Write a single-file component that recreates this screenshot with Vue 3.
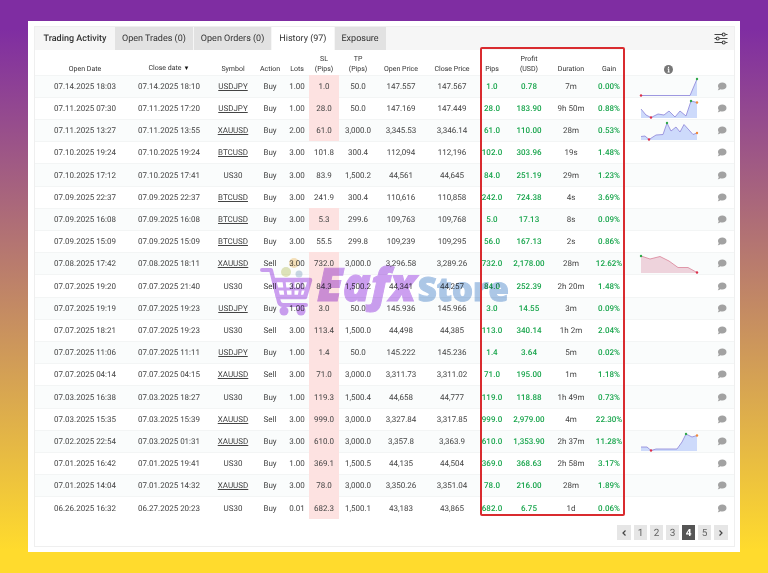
<template>
  <main class="page">
    <section class="panel">
      <div class="frame">
        <header class="tabs">
          <h1 class="heading">Trading Activity</h1>
          <nav class="tab-list">
            <button v-for="t in tabs" :key="t" type="button" class="tab" :class="{ active: t === activeTab }" @click="activeTab = t">{{ t }}</button>
          </nav>
          <button type="button" class="filter" aria-label="Filter">
            <svg viewBox="0 0 14 14" width="14" height="14" fill="none" stroke="#444" stroke-width="1.1">
              <path d="M0.500 2.500H8M11.500 2.500H13.500M0.500 6.500H2M5.500 6.500H13.500M0.500 10.500H8M11.500 10.500H13.500" />
              <circle cx="9.700" cy="2.500" r="1.500" /><circle cx="3.700" cy="6.500" r="1.500" /><circle cx="9.700" cy="10.500" r="1.500" />
            </svg>
          </button>
        </header>

        <div class="content">
          <div class="watermark" aria-hidden="true">
            <svg class="cart" viewBox="0 0 56 60" width="56" height="60">
              <circle cx="35" cy="7" r="5" fill="#f8dfb4" /><circle cx="27" cy="16" r="5" fill="#dfe2b4" /><circle cx="40" cy="18" r="3.500" fill="#c4d4e2" />
              <path d="M3 14H12L20 46Q21 49 24 49H47" fill="none" stroke="#c795ef" stroke-width="4" stroke-linecap="round" stroke-linejoin="round" />
              <path d="M15 24H51L46 41H19Z" fill="none" stroke="#c795ef" stroke-width="4.500" stroke-linejoin="round" />
              <path d="M17 33H49M25 25L27 41M34 25V41M43 25L40 41" fill="none" stroke="#c795ef" stroke-width="3" />
              <circle cx="25" cy="55" r="4.500" fill="#c795ef" /><circle cx="42" cy="55" r="4.500" fill="#c795ef" />
            </svg>
            <div class="wordmark"><span class="brand">Eafx</span><span class="brand-store">Store</span></div>
          </div>

          <table class="trades">
            <colgroup>
              <col v-for="c in columns" :key="c.key" :class="'col-' + c.key">
            </colgroup>
            <thead>
              <tr>
                <th v-for="c in columns" :key="c.key" scope="col" :class="'cell-' + c.key">
                  <svg v-if="c.key === 'chart'" class="info" viewBox="0 0 10 10" width="9" height="9" role="img" aria-label="Info">
                    <circle cx="5" cy="5" r="5" fill="#777" /><path d="M5 2V3.200M4 4.500H5.200V7.500M4 7.700H6.300" fill="none" stroke="#fff" stroke-width="1.200" />
                  </svg>
                  <template v-else>{{ c.label }}<span v-if="c.key === 'close'" class="sort">▼</span></template>
                </th>
              </tr>
            </thead>
            <tbody>
              <tr v-for="r in rows" :key="r.open">
                <td class="cell-open">{{ r.open }}</td>
                <td class="cell-close">{{ r.close }}</td>
                <td><a v-if="r.symbol !== 'US30'" href="#">{{ r.symbol }}</a><template v-else>US30</template></td>
                <td>{{ r.action }}</td>
                <td>{{ r.lots }}</td>
                <td :class="{ hit: r.hit }">{{ r.sl }}</td>
                <td>{{ r.tp }}</td>
                <td>{{ r.openPrice }}</td>
                <td>{{ r.closePrice }}</td>
                <td class="gain">{{ r.pips }}</td>
                <td class="gain">{{ r.profit }}</td>
                <td>{{ r.duration }}</td>
                <td class="gain">{{ r.gain }}</td>
                <td>
                  <svg v-if="charts[r.open]" class="spark" :class="{ loss: charts[r.open].loss }" viewBox="0 0 60 20" width="60" height="20">
                    <polygon :points="`2,19 ${charts[r.open].line} 58,19`" />
                    <polyline :points="charts[r.open].line" />
                    <circle v-for="d in charts[r.open].dots" :key="d[0]" :cx="d[0]" :cy="d[1]" r="1.200" :fill="d[2]" />
                  </svg>
                </td>
                <td class="cell-comment">
                  <button type="button" class="comment" aria-label="Comment">
                    <svg viewBox="0 0 10 9" width="10" height="9"><path d="M5.300 0.500C7.800 0.500 9.500 2 9.500 4S7.800 7.500 5.300 7.500C4.600 7.500 4 7.400 3.400 7.200C2.700 7.900 1.700 8.200 0.700 8.200C1.300 7.600 1.700 6.900 1.700 6.100C1.200 5.500 1 4.800 1 4C1 2 2.800 0.500 5.300 0.500Z" fill="#a2a2a2" /></svg>
                  </button>
                </td>
              </tr>
            </tbody>
          </table>
          <div class="highlight"></div>
        </div>

        <nav class="pager" aria-label="Pages">
          <button type="button" aria-label="Previous"><svg viewBox="0 0 6 8" width="6" height="8"><path d="M4.500 1.500L2 4L4.500 6.500" /></svg></button>
          <button v-for="n in 5" :key="n" type="button" class="number" :class="{ current: n === page }" @click="page = n">{{ n }}</button>
          <button type="button" aria-label="Next"><svg viewBox="0 0 6 8" width="6" height="8"><path d="M1.500 1.500L4 4L1.500 6.500" /></svg></button>
        </nav>
      </div>
    </section>
  </main>
</template>

<script setup>
import { ref } from 'vue'

const tabs = ['Open Trades (0)', 'Open Orders (0)', 'History (97)', 'Exposure']
const activeTab = ref('History (97)')
const page = ref(4)

const columns = [
  { key: 'open', label: 'Open Date' },
  { key: 'close', label: 'Close date' },
  { key: 'symbol', label: 'Symbol' },
  { key: 'action', label: 'Action' },
  { key: 'lots', label: 'Lots' },
  { key: 'sl', label: 'SL\n(Pips)' },
  { key: 'tp', label: 'TP\n(Pips)' },
  { key: 'open-price', label: 'Open Price' },
  { key: 'close-price', label: 'Close Price' },
  { key: 'pips', label: 'Pips' },
  { key: 'profit', label: 'Profit\n(USD)' },
  { key: 'duration', label: 'Duration' },
  { key: 'gain', label: 'Gain' },
  { key: 'chart', label: '' },
  { key: 'comment', label: '' },
]

// the last value marks trades closed at the stop loss
const rows = [
  ['07.14.2025 18:03', '07.14.2025 18:10', 'USDJPY', 'Buy', '1.00', '1.0', '50.0', '147.557', '147.567', '1.0', '0.78', '7m', '0.00%', true],
  ['07.11.2025 07:30', '07.11.2025 17:20', 'USDJPY', 'Buy', '1.00', '28.0', '50.0', '147.169', '147.449', '28.0', '183.90', '9h 50m', '0.88%', true],
  ['07.11.2025 13:27', '07.11.2025 13:55', 'XAUUSD', 'Buy', '2.00', '61.0', '3,000.0', '3,345.53', '3,346.14', '61.0', '110.00', '28m', '0.53%', true],
  ['07.10.2025 19:24', '07.10.2025 19:24', 'BTCUSD', 'Buy', '3.00', '101.8', '300.4', '112,094', '112,196', '102.0', '303.96', '19s', '1.48%', false],
  ['07.10.2025 17:12', '07.10.2025 17:41', 'US30', 'Buy', '3.00', '83.9', '1,500.2', '44,561', '44,645', '84.0', '251.19', '29m', '1.23%', false],
  ['07.09.2025 22:37', '07.09.2025 22:37', 'BTCUSD', 'Buy', '3.00', '241.9', '300.4', '110,616', '110,858', '242.0', '724.38', '4s', '3.69%', false],
  ['07.09.2025 16:08', '07.09.2025 16:08', 'BTCUSD', 'Buy', '3.00', '5.3', '299.6', '109,763', '109,768', '5.0', '17.13', '8s', '0.09%', true],
  ['07.09.2025 15:09', '07.09.2025 15:09', 'BTCUSD', 'Buy', '3.00', '55.5', '299.8', '109,239', '109,295', '56.0', '167.13', '2s', '0.86%', false],
  ['07.08.2025 17:42', '07.08.2025 18:11', 'XAUUSD', 'Sell', '3.00', '732.0', '3,000.0', '3,296.58', '3,289.26', '732.0', '2,178.00', '28m', '12.62%', true],
  ['07.07.2025 19:20', '07.07.2025 21:40', 'US30', 'Sell', '3.00', '84.3', '1,500.2', '44,341', '44,257', '84.0', '252.39', '2h 20m', '1.48%', true],
  ['07.07.2025 19:19', '07.07.2025 19:23', 'USDJPY', 'Buy', '1.00', '3.0', '50.0', '145.936', '145.966', '3.0', '14.55', '3m', '0.09%', true],
  ['07.07.2025 18:21', '07.07.2025 19:23', 'US30', 'Sell', '3.00', '113.4', '1,500.0', '44,498', '44,385', '113.0', '340.14', '1h 2m', '2.04%', true],
  ['07.07.2025 11:06', '07.07.2025 11:11', 'USDJPY', 'Buy', '1.00', '1.4', '50.0', '145.222', '145.236', '1.4', '3.64', '5m', '0.02%', true],
  ['07.07.2025 04:14', '07.07.2025 04:15', 'XAUUSD', 'Sell', '3.00', '71.0', '3,000.0', '3,311.73', '3,311.02', '71.0', '195.00', '1m', '1.18%', true],
  ['07.03.2025 16:38', '07.03.2025 18:27', 'US30', 'Buy', '1.00', '119.3', '1,500.4', '44,658', '44,777', '119.0', '118.88', '1h 49m', '0.73%', true],
  ['07.03.2025 15:35', '07.03.2025 15:39', 'XAUUSD', 'Sell', '3.00', '999.0', '3,000.0', '3,327.84', '3,317.85', '999.0', '2,979.00', '4m', '22.30%', true],
  ['07.02.2025 22:54', '07.03.2025 01:31', 'XAUUSD', 'Buy', '3.00', '610.0', '3,000.0', '3,357.8', '3,363.9', '610.0', '1,353.90', '2h 37m', '11.28%', true],
  ['07.01.2025 16:42', '07.01.2025 19:41', 'US30', 'Buy', '1.00', '369.1', '1,500.5', '44,135', '44,504', '369.0', '368.63', '2h 58m', '3.17%', true],
  ['07.01.2025 14:04', '07.01.2025 14:32', 'XAUUSD', 'Buy', '3.00', '78.0', '3,000.0', '3,350.26', '3,351.04', '78.0', '216.00', '28m', '1.89%', true],
  ['06.26.2025 16:32', '06.27.2025 20:23', 'US30', 'Buy', '0.01', '682.3', '1,500.1', '43,183', '43,865', '682.0', '6.75', '1d', '0.06%', true],
].map(([open, close, symbol, action, lots, sl, tp, openPrice, closePrice, pips, profit, duration, gain, hit]) => (
  { open, close, symbol, action, lots, sl, tp, openPrice, closePrice, pips, profit, duration, gain, hit }
))

const red = '#dc2f4a'
const green = '#2fa84a'
const orange = '#f08a3c'
const charts = {
  '07.14.2025 18:03': { line: '2,18.500 51,18.500 58,2', dots: [[2, 18.5, red], [58, 2, green]] },
  '07.11.2025 07:30': { line: '2,10 7,16 12,18.500 19,15 25,16 30,12 36,18 41,12 47,17 52,2 58,3.500', dots: [[12, 18.5, red], [52, 2, green], [58, 3.5, orange]] },
  '07.11.2025 13:27': { line: '2,15.500 6,15 10,18.500 17,14 24,13.500 28,2 32,10 37,6 41,11 45,3.500 50,9 54,13.500 58,12', dots: [[10, 18.5, red], [28, 2, green], [58, 12, orange]] },
  '07.08.2025 17:42': { loss: true, line: '2,2 11,5 21,2.500 30,7 39,13.500 49,13.500 58,18.500', dots: [[2, 2, green], [58, 18.5, red]] },
  '07.02.2025 22:54': { line: '2,15 8,15 12,18.500 17,17 38,17 43,10 47,2 53,5 58,3.500', dots: [[12, 18.5, red], [47, 2, green], [58, 3.5, orange]] },
}
</script>

<style>
body { margin: 0; }
</style>

<style scoped>
.page { box-sizing: border-box; min-height: 100vh; padding: 21px 28px; background: linear-gradient(#7f2da2 0%, #7f2da2 5%, #ffdb2d 96%); font-family: Roboto, "Liberation Sans", sans-serif; font-size: 8px; color: #444; text-rendering: geometricPrecision; }
.page button { font-family: inherit; text-rendering: inherit; border: none; padding: 0; cursor: pointer; }
.panel { padding: 5px 5px 5px 6px; background: #fff; }
.frame { border: 1px solid #efefef; }
.tabs { display: flex; align-items: stretch; height: 23px; background: #f6f6f6; }
.heading { margin: 0; width: 80px; font-size: 9px; line-height: 25px; font-weight: 500; text-align: center; white-space: nowrap; color: #333; }
.tab-list { display: flex; gap: 1px; }
.page .tab { padding: 1px 7px 0; font-size: 9px; color: #333; background: #e2e2e2; }
.page .tab.active { background: #fff; }
.filter { margin-left: auto; width: 27px; background: none; }
.filter svg { display: block; margin: 0 auto; }
.content { position: relative; }
.trades { width: 100%; table-layout: fixed; border-collapse: collapse; }
.col-open { width: 90px; }
.col-close { width: 86px; }
.col-symbol { width: 44px; }
.col-action { width: 30px; }
.col-lots { width: 24px; }
.col-sl { width: 30px; }
.col-tp { width: 38px; }
.col-open-price { width: 48px; }
.col-close-price { width: 54px; }
.col-pips { width: 26px; }
.col-profit { width: 48px; }
.col-duration { width: 36px; }
.col-gain { width: 40px; }
.col-chart { width: 79px; }
.col-comment { width: 26px; }
th, td { box-sizing: border-box; padding: 0; text-align: center; white-space: nowrap; }
th { height: 25px; padding-bottom: 1px; vertical-align: bottom; font-size: 7px; line-height: 10px; font-weight: 400; white-space: pre-line; color: #333; }
td { height: 22px; padding-top: 1px; line-height: 13px; box-shadow: inset 0 1px #f3f5f5; }
tr:nth-child(5n) td { height: 23px; }
tbody tr:nth-child(odd) { background: #fafcfc; }
.cell-open { padding-left: 10px; }
.cell-close { padding-left: 2px; }
.sort { margin-left: 2px; font-size: 6px; color: #111; }
td a { color: inherit; text-decoration: underline; }
.hit { background: #fde2e1; box-shadow: none; }
.gain { color: #18a54c; font-weight: 500; }
.info { display: block; margin: 0 auto; }
.spark { display: block; margin: 0 auto; }
.spark polygon { fill: #cddafb; }
.spark polyline { fill: none; stroke: #8b83d8; stroke-width: 0.8; }
.spark.loss polygon { fill: #eed3dc; }
.spark.loss polyline { stroke: #d98398; }
.cell-comment { padding-left: 2px; }
.comment { display: block; margin: 0 auto; background: none; }
.comment svg { display: block; }
.highlight { position: absolute; left: 445px; right: 109px; top: -3px; bottom: 3px; border: 2px solid #d92b2f; border-radius: 2px; pointer-events: none; }
.watermark { position: absolute; left: 224px; top: 206px; display: flex; align-items: center; gap: 2px; mix-blend-mode: multiply; opacity: 0.9; pointer-events: none; }
.wordmark { display: flex; align-items: baseline; gap: 2px; font-family: "Open Sans", sans-serif; font-weight: 800; line-height: 44px; }
.brand { font-size: 46px; font-style: italic; color: #c795ef; -webkit-text-stroke: 1px #c795ef; }
.brand-store { font-size: 33px; color: #a3c1e4; -webkit-text-stroke: 1px #a3c1e4; }
.pager { display: flex; justify-content: flex-end; gap: 3px; padding: 6px; }
.pager button { width: 14px; height: 15px; font-size: 10px; color: #666; background: #e6e6e6; }
.pager .number { width: 13px; padding-top: 1px; }
.pager .current { color: #fff; background: #555; font-weight: 700; }
.pager svg { display: block; margin: 0 auto; fill: none; stroke: #444; stroke-width: 1.2; }
</style>
